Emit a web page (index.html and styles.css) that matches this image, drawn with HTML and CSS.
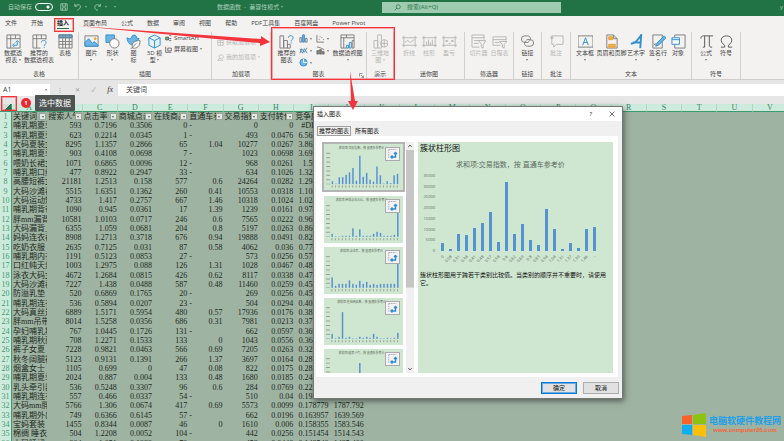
FILE: index.html
```html
<!DOCTYPE html>
<html lang="zh-CN">
<head>
    <meta charset="UTF-8">
    <meta name="viewport" content="width=device-width, initial-scale=1.0">
    <title>数据函数 - 兼容性模式</title>
    <link rel="stylesheet" href="styles.css">
</head>
<body>
    <header class="titlebar">
        <label class="autosave">自动保存 <input type="checkbox" class="toggle"></label>
        <button class="quick" aria-label="保存"><svg viewBox="0 0 10 10"><path d="M1 1h8v8H1zM3 1v3h4V1M3 9V6h4v3"/></svg></button>
        <button class="quick wide" aria-label="撤消"><svg viewBox="0 0 10 10"><path d="M1 1v3h3M1 4c3-3 8-2 7 1-.4 2-2 3-4 4"/></svg><i class="caret"></i></button>
        <button class="quick wide" aria-label="恢复"><svg viewBox="0 0 10 10"><path d="M8 1v3H5M8 4C5 1 1 2 1 5s2 4 4 4"/></svg><i class="caret"></i></button>
        <button class="quick" aria-label="更多"><i class="caret"></i></button>
        <span class="doc-name">数据函数 &nbsp;-&nbsp; 兼容性模式 <i class="caret"></i></span>
        <div class="search">
            <svg viewBox="0 0 10 10"><circle cx="6" cy="4" r="3"/><path d="M4 6L1 9"/></svg>
            <input type="text" placeholder="搜索(Alt+Q)" aria-label="搜索">
        </div>
        <span class="user">y</span>
    </header>

    <nav class="tabs">
        <a href="#">文件</a>
        <a href="#">开始</a>
        <a href="#" class="active">插入</a>
        <a href="#">页面布局</a>
        <a href="#">公式</a>
        <a href="#">数据</a>
        <a href="#">审阅</a>
        <a href="#">视图</a>
        <a href="#">帮助</a>
        <a href="#">PDF工具集</a>
        <a href="#">百度网盘</a>
        <a href="#">Power Pivot</a>
    </nav>

    <div class="ribbon">
        <section class="group">
            <div class="tools">
                <button class="tool w24"><svg viewBox="0 0 16 16"><path d="M1 1h14v14H1zM1 5h14M5 1v14M10 1v4"/><path class="blue" d="M8 12h4V8M10 9l2-2 2 2M9 10l-2 2 2 2"/></svg><span>数据透<br>视表 <i class="caret"></i></span></button>
                <button class="tool w28"><svg viewBox="0 0 16 16"><path d="M9 15H1V1h14v5M1 5h14M5 1v14M10 1v4"/><path class="blue" d="M10 9c0-3 5-3 5 0 0 2-2 2-2 4M13 14v1"/></svg><span>推荐的<br>数据透视表</span></button>
                <button class="tool w24"><svg viewBox="0 0 16 16"><path class="fill-blue" d="M1 1h14v3H1z"/><path d="M1 1h14v14H1zM1 4h14M1 8h14M1 11h14M5 1v14M8 1v14M12 1v14"/></svg><span>表格</span></button>
            </div>
            <h2>表格</h2>
        </section>

        <section class="group">
            <div class="tools start">
                <button class="tool"><svg viewBox="0 0 16 16"><path d="M1 2h14v11H1z"/><path class="fill-blue" d="M1 13V9l4-4 4 5 2-2 4 4v1z"/><circle class="fill-orange" cx="12" cy="5" r="1"/></svg><span>图片<br><i class="caret"></i></span></button>
                <button class="tool"><svg viewBox="0 0 16 16"><path class="fill-blue" d="M1 1h9v8H1z"/><circle class="fill-white" cx="10" cy="10" r="5"/></svg><span>形状<br><i class="caret"></i></span></button>
                <button class="tool"><svg viewBox="0 0 16 16"><path class="fill-blue" d="M1 4c3 2 5 1 5-1 1-3 6-2 5 1l3 1c-1 2-3 2-4 3-1 5-8 5-9-4z"/><path class="fill-white" d="M7 15c-2-6 3-8 8-8 0 6-3 9-8 8zM5 16l6-6"/></svg><span>图<br>标</span></button>
                <button class="tool"><svg viewBox="0 0 16 16"><path class="blue fill-pale" d="M8 1l6 3v8l-6 3-6-3V4zM2 4l6 3 6-3M8 7v8"/></svg><span>3D 模<br>型 <i class="caret"></i></span></button>
                <div class="stack">
                    <button class="line"><svg viewBox="0 0 10 10"><path class="fill-green" d="M1 3h4v4H1z"/><path d="M6 1h3M6 5h3M6 8h3"/></svg>SmartArt</button>
                    <button class="line"><svg viewBox="0 0 10 10"><path d="M1 1v8h8M4 3h5v4H4z"/></svg>屏幕截图 <i class="caret"></i></button>
                </div>
            </div>
            <h2>插图</h2>
        </section>

        <section class="group">
            <div class="tools start">
                <div class="stack roomy">
                    <button class="line" disabled><svg viewBox="0 0 10 10"><path d="M1 2h8v7H1zM1 5h8M5 2v7"/></svg>获取加载项</button>
                    <button class="line" disabled><svg viewBox="0 0 10 10"><circle cx="6" cy="4" r="3"/><path d="M4 6L1 9h8"/></svg>我的加载项 <i class="caret"></i></button>
                </div>
            </div>
            <h2>加载项</h2>
        </section>

        <section class="group">
            <div class="tools">
                <button class="tool w24"><svg viewBox="0 0 16 16"><path d="M1 2h4v13H1zM5 7h4v8H5zM9 11h3v4H9z"/><path class="blue" d="M10 4c0-3 5-3 5 0 0 2-2 2-2 4M13 9v1"/></svg><span>推荐的<br>图表</span></button>
                <div class="minis">
                    <button aria-label="柱形图"><svg viewBox="0 0 10 10"><path d="M1 4h2v5H1zM7 5h2v4H7z"/><path class="fill-blue" d="M4 1h2v8H4z"/></svg><i class="caret"></i></button>
                    <button aria-label="散点图"><svg viewBox="0 0 10 10"><path d="M1 1v8h8M3 6h1M6 4h1M8 6h1M4 3h1"/></svg><i class="caret"></i></button>
                    <button aria-label="折线图"><svg viewBox="0 0 10 10"><path d="M1 8l2-5 3 4 3-5"/><path class="blue" d="M1 3l3 5 2-5 3 5"/></svg><i class="caret"></i></button>
                    <button aria-label="组合图"><svg viewBox="0 0 10 10"><path class="fill-dark" d="M1 5h2v4H1zM4 4h2v5H4zM7 6h2v3H7z"/><path d="M1 1l4 1 4 2"/></svg><i class="caret"></i></button>
                    <button aria-label="饼图"><svg viewBox="0 0 10 10"><circle class="fill-blue" cx="5" cy="5" r="4"/><path class="white" d="M5 1v4h4"/></svg><i class="caret"></i></button>
                </div>
                <button class="tool w30"><svg viewBox="0 0 16 16"><path d="M7 15H1V1h14v6M1 4h14M4 4v11M7 1v3"/><path class="blue" d="M7 12h2v3H7zM10 9h2v6h-2z"/><path d="M13 7h2v8h-2z"/></svg><span>数据透视图<br><i class="caret"></i></span></button>
            </div>
            <h2>图表</h2>
            <button class="launcher" aria-label="查看所有图表"><svg viewBox="0 0 10 10"><path d="M1 7V1h6M4 4l5 5M9 5v4H5"/></svg></button>
        </section>

        <section class="group">
            <div class="tools">
                <button class="tool" disabled><svg viewBox="0 0 16 16"><path d="M1 7h4v8H1zM5 1h4v14H5z"/><circle cx="12" cy="10" r="4"/><path d="M8 10h8M12 6v8"/></svg><span>三维地<br>图 <i class="caret"></i></span></button>
            </div>
            <h2>演示</h2>
        </section>

        <section class="group">
            <div class="tools">
                <button class="tool w20" disabled><svg viewBox="0 0 16 16"><path d="M2 2v12M14 2v12M0 4h16M0 12h16M3 9l3-2 3 2 4-3"/></svg><span>折线</span></button>
                <button class="tool w20" disabled><svg viewBox="0 0 16 16"><path d="M2 2v12M14 2v12M0 4h16M0 12h16M5 12V8M7 12V6M9 12V9M11 12V6"/></svg><span>柱形</span></button>
                <button class="tool w20" disabled><svg viewBox="0 0 16 16"><path d="M2 2v12M14 2v12M0 4h16M0 12h16M4 7h2v1H4zM10 7h2v1h-2zM7 10h2"/></svg><span>盈亏</span></button>
            </div>
            <h2>迷你图</h2>
        </section>

        <section class="group">
            <div class="tools">
                <button class="tool" disabled><svg viewBox="0 0 16 16"><path d="M9 14H1V1h13v5M1 4h13M3 7h7M3 10h5M8 7h8l-3 4v4l-2-1v-3z"/></svg><span>切片器</span></button>
                <button class="tool" disabled><svg viewBox="0 0 16 16"><path d="M9 12H1V3h14v4M1 6h14M3 9h5M8 8h8l-3 3v4l-2-1v-3z"/></svg><span>日程表</span></button>
            </div>
            <h2>筛选器</h2>
        </section>

        <section class="group">
            <div class="tools">
                <button class="tool"><svg viewBox="0 0 16 16"><path d="M9 9H5a3 3 0 010-7h3c4 0 4 5 1 6M7 6h4a3 3 0 010 7H8c-4 0-4-5-1-6"/></svg><span>链接<br><i class="caret"></i></span></button>
            </div>
            <h2>链接</h2>
        </section>

        <section class="group">
            <div class="tools">
                <button class="tool" disabled><svg viewBox="0 0 16 16"><path d="M3 2h12v9H8l-3 3v-3H3zM1 4h4M3 2v4"/></svg><span>批注</span></button>
            </div>
            <h2>批注</h2>
        </section>

        <section class="group">
            <div class="tools start flush">
                <button class="tool w28"><svg viewBox="0 0 16 16"><path d="M0 2h16v12H0z"/><path class="blue" d="M5 12l3-8 3 8M6 9h4"/></svg><span>文本框<br><i class="caret"></i></span></button>
                <button class="tool w25"><svg viewBox="0 0 16 16"><path d="M3 1h7l4 4v10H3zM10 1v4h4"/><path class="fill-orange" d="M5 3h4v3H5zM5 11h7v3H5z"/></svg><span>页眉和页脚</span></button>
                <button class="tool w24"><svg viewBox="0 0 16 16"><path class="blue thick" d="M2 10c3 1 7-3 11-9l-1 14M4 9h9"/></svg><span>艺术字<br><i class="caret"></i></span></button>
                <button class="tool w20"><svg viewBox="0 0 16 16"><path d="M2 1h10v14H2zM3 12l2-2M3 10l2 2"/><path class="fill-blue" d="M14 2l2 2-8 8-3 1 1-3z"/></svg><span>签名行<br><i class="caret"></i></span></button>
                <button class="tool w20"><svg viewBox="0 0 16 16"><path d="M4 4V1h11v14H4v-4"/><path class="blue fill-white" d="M1 4h8v7H1zM1 6h8"/></svg><span>对象</span></button>
            </div>
            <h2>文本</h2>
        </section>

        <section class="group">
            <div class="tools">
                <button class="tool w20"><svg viewBox="0 0 16 16"><path class="heavy" d="M2 5c0-2 1-3 3-3h10M6 2v12H4M11 2v10c0 2 1 2 3 2"/></svg><span>公式<br><i class="caret"></i></span></button>
                <button class="tool w20"><svg viewBox="0 0 16 16"><path class="heavy" d="M2 14h4v-2C0 8 2 2 8 2s8 6 2 10v2h4"/></svg><span>符号</span></button>
            </div>
            <h2>符号</h2>
        </section>
    </div>

    <div class="formula-bar">
        <button class="name-box">A1 <i class="caret"></i></button>
        <div class="formula-tools">
            <span>⋮</span>
            <button aria-label="取消">✕</button>
            <button aria-label="输入">✓</button>
            <button class="fx" aria-label="插入函数">fx</button>
        </div>
        <input type="text" class="formula" value="关键词" aria-label="编辑栏">
    </div>

    <main class="sheet">
        <table class="cells">
            <thead><tr id="letters"></tr></thead>
            <tbody id="rows"></tbody>
        </table>
    </main>

    <div class="dialog" role="dialog" aria-label="插入图表">
        <div class="dialog-title">
            <span>插入图表</span>
            <button aria-label="帮助">?</button>
            <button aria-label="关闭"><svg viewBox="0 0 10 10"><path d="M1 1l8 8M9 1L1 9"/></svg></button>
        </div>
        <div class="dialog-tabs">
            <button class="selected">推荐的图表</button>
            <button>所有图表</button>
        </div>
        <div class="dialog-body">
            <div class="thumbs" id="thumbs"></div>
            <div class="scrollbar">
                <button aria-label="向上"><svg viewBox="0 0 10 10"><path d="M3 6l2-2 2 2"/></svg></button>
                <div class="track"></div>
                <button aria-label="向下"><svg viewBox="0 0 10 10"><path d="M3 4l2 2 2-2"/></svg></button>
            </div>
            <div class="preview">
                <h3>簇状柱形图</h3>
                <svg class="chart" id="chart" viewBox="0 0 195 118"></svg>
                <p>簇状柱形图用于跨若干类别比较值。当类别的顺序并不重要时，请使用它。</p>
            </div>
        </div>
        <div class="dialog-actions">
            <button class="ok">确定</button>
            <button>取消</button>
        </div>
    </div>

    <!-- tutorial marks over the window -->
    <div class="mark mark-tab"></div>
    <div class="mark mark-charts"></div>
    <div class="mark mark-corner"></div>
    <svg class="arrows" viewBox="0 0 784 441">
        <path d="M78 26L261 39V36L270 42L260 46V43Z"/>
        <path d="M350 71L355 101H358L353 110L348 101H351Z"/>
    </svg>
    <div class="step"><b>1</b><span>选中数据</span></div>

    <div class="watermark">
        <svg viewBox="0 0 24 24">
            <path fill="#f8632b" d="M0 3l10-1v9H0z"/>
            <path fill="#8cc211" d="M11 2l13-2v11H11z"/>
            <path fill="#10adf0" d="M0 12h10v10L0 21z"/>
            <path fill="#fcc00b" d="M11 12h13v12l-13-2z"/>
        </svg>
        <div>
            <strong>电脑软硬件教程网</strong>
            <a href="#">www.computer26.com</a>
        </div>
    </div>

    <script src="script.js"></script>
</body>
</html>
```
FILE: styles.css
```css
* {
    box-sizing: border-box;
}
body {
    margin: 0;
    height: 100vh;
    overflow: hidden;
    position: relative;
    display: flex;
    flex-direction: column;
    background-color: #e6e6e6;
    color: #444;
    font-family: "Open Sans", "Noto Sans CJK SC", sans-serif;
    font-size: 6px;
    line-height: 8px;
}
button, input {
    margin: 0;
    padding: 0;
    border: none;
    background: none;
    color: inherit;
    font: inherit;
}
h2, h3, p {
    margin: 0;
    font-weight: normal;
    font-size: 6px;
}
a {
    color: inherit;
    text-decoration: none;
}
svg {
    display: block;
    fill: none;
    stroke: currentColor;
}
.caret {
    display: inline-block;
    border: 1px solid transparent;
    border-top: 2px solid currentColor;
    border-bottom: none;
    vertical-align: middle;
    opacity: 0.7;
}

/* title bar */
.titlebar {
    flex: none;
    display: flex;
    align-items: center;
    height: 16px;
    padding: 0 1px 2px 8px;
    background-color: #217346;
    color: #a9cfb8;
}
.autosave {
    display: flex;
    align-items: center;
    gap: 3px;
    width: 52px;
}
.toggle {
    appearance: none;
    width: 18px;
    height: 8px;
    border: 1px solid #fff;
    border-radius: 4px;
    background: radial-gradient(circle at 12px 3px, #fff 1px, transparent 2px);
}
.quick {
    display: flex;
    align-items: center;
    gap: 3px;
    width: 14px;
}
.quick.wide {
    width: 20px;
}
.quick svg {
    width: 8px;
    height: 8px;
}
.doc-name {
    box-sizing: content-box;
    width: 76px;
    padding-left: 89px;
    white-space: nowrap;
}
.search {
    display: flex;
    align-items: center;
    gap: 6px;
    width: 179px;
    height: 11px;
    margin-left: 89px;
    padding-left: 12px;
    background-color: #9fcbb0;
    color: #27754b;
}
.search svg {
    width: 7px;
    height: 7px;
}
.search input {
    flex: 1;
    min-width: 0;
}
.search input::placeholder {
    color: #27754b;
}
.user {
    margin-left: auto;
}

/* ribbon */
.tabs {
    flex: none;
    display: flex;
    gap: 14px;
    height: 14px;
    padding: 3px 5px 0;
    background-color: #f3f2f1;
    white-space: nowrap;
}
.tabs a {
    height: 10px;
}
.tabs .active {
    border-bottom: 1px solid #217346;
    color: #222;
    font-weight: bold;
}
.ribbon {
    flex: none;
    display: grid;
    grid-template-columns: 79px 133px 59px 96px 27px 71px 49px 28px 29px 121px 49px;
    height: 50px;
    padding-top: 2px;
    background-color: #f3f2f1;
    border-bottom: 1px solid #cfcecd;
}
.group {
    position: relative;
    display: flex;
    flex-direction: column;
    justify-content: space-between;
    min-width: 0;
    border-right: 1px solid #d2d0ce;
}
.group h2 {
    height: 9px;
    text-align: center;
}
.tools {
    display: flex;
    justify-content: center;
    padding-top: 2px;
}
.tools.start {
    justify-content: flex-start;
    padding-left: 2px;
}
.tools.flush {
    padding-left: 0;
}
.tool {
    flex: none;
    display: flex;
    flex-direction: column;
    align-items: center;
    gap: 1px;
    width: 21px;
    line-height: 7px;
    white-space: nowrap;
}
.tool svg {
    width: 15px;
    height: 15px;
    color: #7d7d7d;
}
.tool:disabled, .line:disabled, .tool:disabled svg {
    color: #b8b6b4;
}
.w20 { width: 20px; }
.w24 { width: 24px; }
.w25 { width: 25px; }
.w28 { width: 28px; }
.w30 { width: 30px; }
.blue { stroke: #2f8fd0; }
.white { stroke: #fff; }
.thick { stroke-width: 2px; }
.heavy { stroke: #555; }
.fill-blue { fill: #6db3e3; stroke: #2f8fd0; }
.fill-pale { fill: #e2f1fb; }
.fill-white { fill: #fafafa; }
.fill-green { fill: #6fb38c; }
.fill-orange { fill: #f5b042; stroke: #e8a030; }
.fill-dark { fill: #777; }
.stack {
    display: flex;
    flex-direction: column;
    gap: 3px;
}
.stack.roomy {
    gap: 7px;
    padding: 4px 3px;
}
.line {
    display: flex;
    align-items: center;
    gap: 2px;
    white-space: nowrap;
}
.line svg {
    width: 7px;
    height: 7px;
}
.minis {
    display: grid;
    grid-template-columns: 17px 17px;
    align-content: start;
    gap: 3px 0;
}
.minis button {
    display: flex;
    align-items: center;
    gap: 2px;
}
.minis svg {
    width: 9px;
    height: 9px;
    color: #777;
}
.launcher {
    position: absolute;
    right: 2px;
    bottom: 1px;
}
.launcher svg {
    width: 5px;
    height: 5px;
}

/* formula bar */
.formula-bar {
    flex: none;
    display: flex;
    height: 16px;
    padding: 4px 0 0;
    margin-bottom: 8px;
}
.name-box {
    display: flex;
    align-items: center;
    justify-content: space-between;
    width: 50px;
    padding: 0 3px;
    background-color: #fff;
    font-size: 7px;
}
.formula-tools {
    display: flex;
    align-items: center;
    justify-content: space-between;
    width: 68px;
    padding: 0 5px 0 7px;
    color: #999;
}
.fx {
    color: #333;
    font-family: "Liberation Serif", serif;
    font-style: italic;
    font-size: 8px;
}
.formula {
    flex: 1;
    padding: 0 8px;
    background-color: #fff;
    font-size: 7px;
}

/* cells */
.sheet {
    flex: 1;
    min-height: 0;
    overflow: hidden;
    background-color: #9fb3a3;
}
.cells {
    width: calc(100% + 4px);
    height: 344px;
    table-layout: fixed;
    border-collapse: separate;
    border-spacing: 0;
    font-family: "Liberation Serif", "Noto Sans CJK SC", serif;
    font-size: 8px;
    line-height: 9px;
    color: #1c2a20;
}
.cells th, .cells td {
    padding: 0 1px;
    overflow: hidden;
    white-space: nowrap;
    text-align: right;
    font-weight: normal;
}
.cells thead th {
    height: 8px;
    line-height: 7px;
    background-color: #ccebdc;
    border-right: 1px solid #b4d6c5;
    border-bottom: 1px solid #3c9a6e;
    color: #3c8461;
    text-align: center;
}
.cells th.num {
    width: 12px;
    padding: 0;
    background-color: #ccebdc;
    border-right: 1px solid #3c9a6e;
    color: #4c9674;
    text-align: center;
}
.cells th.corner {
    background: linear-gradient(135deg, #d8dad8 60%, #217346 60%);
}
.cells td.text {
    text-align: left;
}
.head {
    display: flex;
    align-items: center;
    justify-content: space-between;
}
.head span {
    overflow: hidden;
}
.filter {
    flex: none;
    display: flex;
    align-items: center;
    justify-content: center;
    width: 7px;
    height: 7px;
    border: 1px solid #98a59b;
    background-color: #e3e8e4;
}

/* insert chart dialog */
.dialog {
    position: absolute;
    left: 313px;
    top: 106px;
    display: flex;
    flex-direction: column;
    width: 310px;
    height: 293px;
    border: 1px solid #777;
    background-color: #f0f0f0;
    box-shadow: 1px 2px 6px rgba(0, 0, 0, 0.5);
    color: #111;
}
.dialog-title {
    display: flex;
    align-items: center;
    gap: 17px;
    height: 14px;
    padding: 0 7px 0 3px;
    background-color: #fff;
}
.dialog-title span {
    flex: 1;
}
.dialog-title svg {
    width: 6px;
    height: 6px;
}
.dialog-tabs {
    display: flex;
    align-items: flex-end;
    gap: 4px;
    height: 15px;
    padding-left: 3px;
}
.dialog-tabs button {
    height: 10px;
    line-height: 8px;
}
.dialog-tabs .selected {
    padding: 0 1px;
    border: 1px solid #a0a0a0;
}
.dialog-body {
    flex: 1;
    min-height: 0;
    display: flex;
    margin: 0 4px 0 2px;
    padding: 6px 5px 4px 6px;
    background-color: #fff;
}
.thumbs {
    display: flex;
    flex-direction: column;
    gap: 4px;
    width: 83px;
    overflow: hidden;
}
.thumb {
    flex: none;
    position: relative;
    width: 79px;
    height: 47px;
    margin: 0 2px;
    background-color: #cfe6d0;
}
.thumb.selected {
    width: 83px;
    height: 50px;
    margin: 0;
    border: 2px solid #b4b4b4;
}
.thumb > svg {
    width: 100%;
    height: 100%;
}
.swap {
    position: absolute;
    right: 3px;
    top: 3px;
    width: 15px;
    height: 14px;
    border: 1px solid #aaa;
    background-color: #f3f3f7;
}
.swap svg {
    width: 100%;
    height: 100%;
}
.scrollbar {
    display: flex;
    flex-direction: column;
    width: 8px;
    margin: 0 4px 0 1px;
    background-color: #f0f0f0;
}
.scrollbar svg {
    width: 8px;
    height: 8px;
}
.track {
    flex: 1;
    background: linear-gradient(#c6c6c6, #c6c6c6) no-repeat 0 0 / 100% 64%;
}
.preview {
    flex: 1;
    min-width: 0;
    background-color: #cfe6d0;
}
.preview h3 {
    padding: 1px 2px 0;
    font-size: 8px;
    line-height: 10px;
}
.preview p {
    padding: 0 2px;
}
.chart {
    width: 100%;
}
.bar {
    fill: #5592d2;
    stroke: none;
}
.chart text, .thumb text {
    fill: #5c6b60;
    stroke: none;
}
.chart .title {
    font-size: 7px;
}
.chart .tick {
    font-size: 4px;
    text-anchor: end;
}
.thumb .title {
    font-size: 6px;
    text-anchor: middle;
}
.thumb .marks {
    stroke: #93a296;
}
.dialog-actions {
    display: flex;
    justify-content: flex-end;
    gap: 6px;
    padding: 5px 3px 4px;
}
.dialog-actions button {
    width: 36px;
    height: 12px;
    border: 1px solid #adadad;
    background-color: #e1e1e1;
}
.dialog-actions .ok {
    border-color: #0078d7;
    outline: 1px solid #6aabe0;
    outline-offset: -2px;
}

/* tutorial marks */
.mark {
    position: absolute;
    border: 1px solid #f5333b;
    outline: 1px solid rgba(245, 51, 59, 0.4);
    outline-offset: -2px;
}
.mark-tab {
    left: 54px;
    top: 18px;
    width: 20px;
    height: 14px;
}
.mark-charts {
    left: 271px;
    top: 27px;
    width: 124px;
    height: 53px;
}
.mark-corner {
    left: 1px;
    top: 96px;
    width: 16px;
    height: 15px;
}
.arrows {
    position: absolute;
    left: 0;
    top: 0;
    width: 784px;
    height: 441px;
    fill: #f5333b;
    stroke: none;
    pointer-events: none;
}
.step {
    position: absolute;
    left: 21px;
    top: 95px;
    display: flex;
    align-items: center;
    gap: 4px;
    color: #fff;
}
.step b {
    width: 10px;
    height: 10px;
    border-radius: 5px;
    background-color: #ee2630;
    line-height: 10px;
    text-align: center;
}
.step span {
    padding: 2px 4px;
    border-radius: 1px;
    background-color: #4e5451;
    font-size: 8px;
    line-height: 12px;
}
.watermark {
    position: absolute;
    right: 3px;
    bottom: 4px;
    display: flex;
    align-items: center;
    gap: 3px;
}
.watermark svg {
    width: 24px;
    height: 24px;
    stroke: none;
}
.watermark div {
    display: flex;
    flex-direction: column;
    align-items: center;
}
.watermark strong {
    color: #22a0e8;
    font-size: 9px;
    line-height: 10px;
}
.watermark a {
    color: #f0653a;
    font-family: "Liberation Sans", sans-serif;
    font-weight: bold;
}
```
FILE: script.js
```js
const headers = ['关键词', '搜索人气', '点击率', '商城点击', '在线商品', '直通车参', '交易指数', '支付转化', '竞争度'];

const data = [
    ['哺乳期夏季', '593', '0.7196', '0.3506', '0', '-', '0', '0', '#DIV/0!'],
    ['哺乳期夏季', '623', '0.2214', '0.0345', '1', '-', '493', '0.0476', '6.562130'],
    ['大码夏装女', '8295', '1.1357', '0.2866', '65', '1.04', '10277', '0.0267', '3.862041'],
    ['哺乳期夏季', '903', '0.4108', '0.0698', '7', '-', '1023', '0.0698', '3.691044'],
    ['喂奶长裙女', '1071', '0.6865', '0.0096', '12', '-', '968', '0.0261', '1.59421'],
    ['哺乳期口红', '477', '0.8922', '0.2947', '33', '-', '634', '0.1026', '1.322840'],
    ['高腰短裤女', '21181', '1.2513', '0.158', '577', '0.6', '24264', '0.0282', '1.294502'],
    ['大码沙滩裙', '5515', '1.6351', '0.1362', '260', '0.41', '10553', '0.0318', '1.103377'],
    ['大码运动短', '4733', '1.417', '0.2757', '667', '1.46', '10318', '0.1024', '1.024418'],
    ['哺乳期背带', '1090', '0.945', '0.0361', '17', '1.39', '1239', '0.0161', '0.974212'],
    ['胖mm漏背_', '10581', '1.0103', '0.0717', '246', '0.6', '7565', '0.0222', '0.963351'],
    ['大码漏背_', '6355', '1.059', '0.0681', '204', '0.8', '5197', '0.0263', '0.866120'],
    ['妈妈连衣裙', '8908', '1.2713', '0.3718', '676', '0.94', '19888', '0.0491', '0.823016'],
    ['吃奶衣服', '2635', '0.7125', '0.031', '87', '0.58', '4062', '0.036', '0.776611'],
    ['哺乳期内衣', '1191', '0.5123', '0.0853', '27', '-', '573', '0.0256', '0.572930'],
    ['口红纯天然', '1003', '1.2975', '0.088', '126', '1.31', '1028', '0.0467', '0.482145'],
    ['泳衣大码女', '4672', '1.2684', '0.0815', '426', '0.62', '8117', '0.0338', '0.471129'],
    ['大码沙滩裙', '7227', '1.438', '0.0488', '587', '0.48', '11460', '0.0259', '0.458712'],
    ['防溢乳垫', '520', '0.6869', '0.1765', '20', '-', '269', '0.0256', '0.456603'],
    ['哺乳期连衣', '536', '0.5894', '0.0207', '23', '-', '504', '0.0294', '0.403821'],
    ['大码真丝连', '6889', '1.5171', '0.5954', '480', '0.57', '17936', '0.0176', '0.382274'],
    ['胖mm吊带裙', '8014', '1.5258', '0.0356', '686', '0.31', '7981', '0.0213', '0.371946'],
    ['孕妇哺乳期', '767', '1.0445', '0.1726', '131', '-', '662', '0.0597', '0.369020'],
    ['哺乳期秋款', '708', '1.2271', '0.1533', '133', '0', '1043', '0.0556', '0.361184'],
    ['裤子女夏', '7228', '0.9821', '0.0463', '566', '0.69', '7205', '0.0263', '0.325570'],
    ['秋冬阔腿裤', '5123', '0.9131', '0.1391', '266', '1.37', '3697', '0.0164', '0.287241'],
    ['烟盒女士', '1105', '0.699', '0', '47', '0.08', '822', '0.0175', '0.283316'],
    ['哺乳期夏季', '2024', '0.887', '0.004', '133', '0.48', '1680', '0.0185', '0.244510'],
    ['乳头牵引器', '536', '0.5248', '0.3307', '96', '0.6', '284', '0.0769', '0.221407'],
    ['哺乳期连衣', '557', '0.466', '0.0337', '54', '-', '510', '0.04', '0.193328'],
    ['大码mm胖小', '5766', '1.306', '0.0674', '417', '0.69', '5573', '0.0099', '0.178779', '1787.792'],
    ['哺乳期外出', '749', '0.6366', '0.6145', '57', '-', '662', '0.0196', '0.163957', '1639.569'],
    ['宝妈套装', '1455', '0.8344', '0.0087', '46', '0', '1610', '0.006', '0.158355', '1583.546'],
    ['棉绸 睡衣', '504', '1.2208', '0.0052', '104', '-', '442', '0.0256', '0.151454', '1514.543'],
    ['大码睡裙女', '904', '1.051', '0.1289', '72', '-', '458', '0.0446', '0.148540', '1485.400']
];

const columnCount = 22;

let letters = '<th class="num corner"></th>';
for (let i = 0; i < columnCount; i++) {
    letters += `<th>${String.fromCharCode(65 + i)}</th>`;
}
document.getElementById('letters').innerHTML = letters;

function row(number, cells) {
    let html = `<tr><th class="num">${number}</th>`;
    for (let i = 0; i < columnCount; i++) {
        html += cells[i] || '<td></td>';
    }
    return html + '</tr>';
}

const headCells = headers.map(name => `<td><div class="head"><span>${name}</span><button class="filter" aria-label="筛选"><i class="caret"></i></button></div></td>`);
const body = data.map((values, r) => row(r + 2, values.map((value, i) => {
    const isText = i === 0 || value === '-';
    return `<td${isText ? ' class="text"' : ''}>${value}</td>`;
})));
document.getElementById('rows').innerHTML = row(1, headCells) + body.join('');

// charts
const sales = [3500, 700, 7800, 7500, 10500, 13200, 18000, 4000, 32000, 8100, 12600, 5100, 2600, 19800, 10200, 700, 3500, 1200, 10200, 11400];
const prices = ['0', '0.08', '0.31', '0.34', '0.41', '0.48', '0.57', '0.58', '0.6', '0.62', '0.69', '0.8', '0.83', '0.94', '1.04', '1.31', '1.37', '1.39', '1.46', '-'];

function bars(values, left, step, width, base, height, max) {
    return values.map((value, i) => {
        const h = Math.max(1, Math.round(value / max * height));
        return `<rect class="bar" x="${left + i * step}" y="${base - h}" width="${width}" height="${h}"/>`;
    }).join('');
}

let chart = '<text class="title" x="38" y="14">求和项:交易指数，按 直通车参考价</text>';
for (let i = 0; i <= 7; i++) {
    chart += `<text class="tick" x="17" y="${Math.round(99 - i * 75 / 7)}">${i * 5000}</text>`;
}
chart += bars(sales, 23, 8, 3, 98, 75, 35000);
prices.forEach((price, i) => {
    const x = 26 + i * 8;
    chart += `<text class="tick" transform="rotate(-45 ${x} 104)" x="${x}" y="104">${price}</text>`;
});
document.getElementById('chart').innerHTML = chart;

const thumbs = [
    { title: '求和项:交易指数，按 直通车参考价', values: sales.map(v => v / 1000), max: 32 },
    { title: '求和项:商城点击占比，按 直通车参考价', values: [3, 0, 0, 1, 1, 1, 9, 1, 8, 1, 1, 1, 3, 5, 4, 1, 1, 1, 2, 26], max: 30 },
    { title: '求和项:点击率，按 直通车参考价', values: [11, 2, 4, 4, 4, 8, 4, 3, 7, 4, 6, 3, 4, 3, 4, 4, 4, 4, 4, 27], max: 30 },
    { title: '求和项:在线商品数，按 直通车参考价', values: [5, 0, 2, 28, 1, 2, 0, 0, 2, 1, 2, 1, 5, 2, 0, 0, 1, 0, 1, 6], max: 30 },
    { title: '求和项:搜索人气，按 直通车参考价', values: [3, 1, 4, 3, 6, 8, 9, 2, 28, 6, 8, 3, 2, 12, 6, 1, 2, 1, 5, 6], max: 30 }
];
document.getElementById('thumbs').innerHTML = thumbs.map((thumb, i) => `
    <div class="thumb${i === 0 ? ' selected' : ''}">
        <svg viewBox="0 0 160 94">
            <text class="title" x="76" y="10">${thumb.title}</text>
            <path class="marks" stroke-width="8" stroke-dasharray="2 7" d="M8 18v64"/>
            <path class="marks" stroke-width="4" stroke-dasharray="2 5" d="M15 87h138"/>
            ${bars(thumb.values, 15, 7, 3, 82, 58, thumb.max)}
        </svg>
        <button class="swap" aria-label="切换行列"><svg viewBox="0 0 16 16"><path stroke="#999" stroke-dasharray="2 1" d="M3 2v12M3 2h10"/><path class="blue" stroke-width="2" d="M6 12h6V6M10 8l2-2 2 2M8 10l-2 2 2 2"/></svg></button>
    </div>`).join('');
```
